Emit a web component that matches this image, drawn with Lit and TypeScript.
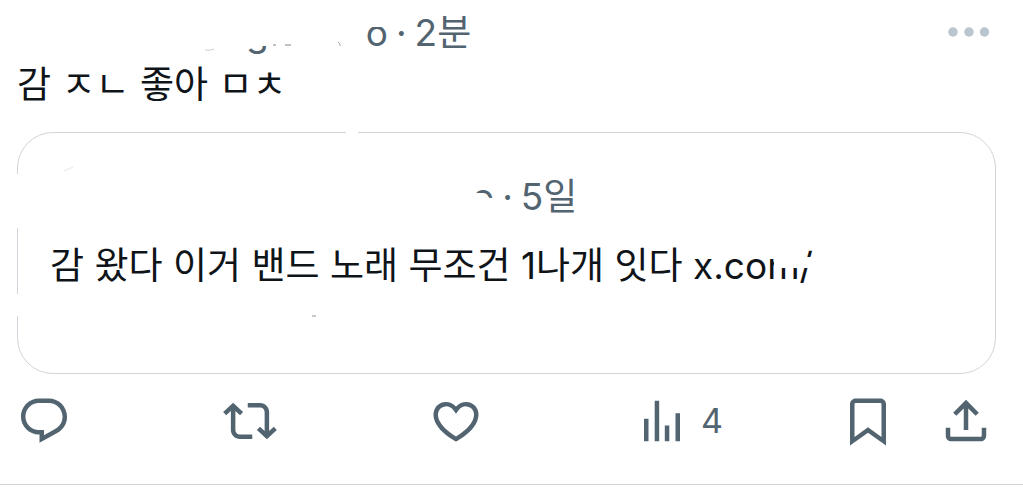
import { LitElement, html, css, svg } from "lit";
import { customElement, property } from "lit/decorators.js";

const ICONS: Record<string, string> = {
  reply:
    "M1.751 10c0-4.42 3.584-8 8.005-8h4.366c4.49 0 8.129 3.64 8.129 8.13 0 2.96-1.607 5.68-4.196 7.11l-8.054 4.46v-3.69h-.067c-4.49.1-8.183-3.51-8.183-8.01zm8.005-6c-3.317 0-6.005 2.69-6.005 6 0 3.37 2.77 6.08 6.138 6.01l.351-.01h1.761v2.3l5.087-2.81c1.951-1.08 3.163-3.13 3.163-5.36 0-3.39-2.744-6.13-6.129-6.13H9.756z",
  repost:
    "M4.5 3.88l4.432 4.14-1.364 1.46L5.5 7.55V16c0 1.1.896 2 2 2H13v2H7.5c-2.209 0-4-1.79-4-4V7.55L1.432 9.48.068 8.02 4.5 3.88zM16.5 6H11V4h5.5c2.209 0 4 1.79 4 4v8.45l2.068-1.93 1.364 1.46-4.432 4.14-4.432-4.14 1.364-1.46 2.068 1.93V8c0-1.1-.896-2-2-2z",
  like:
    "M16.697 5.5c-1.222-.06-2.679.51-3.89 2.16l-.805 1.09-.806-1.09C9.984 6.01 8.526 5.44 7.304 5.5c-1.243.07-2.349.78-2.91 1.91-.552 1.12-.633 2.78.479 4.82 1.074 1.97 3.257 4.27 7.129 6.61 3.87-2.34 6.052-4.64 7.126-6.61 1.111-2.04 1.03-3.7.477-4.82-.561-1.13-1.666-1.84-2.908-1.91zm4.187 7.69c-1.351 2.48-4.001 5.12-8.379 7.67l-.503.3-.504-.3c-4.379-2.55-7.029-5.19-8.382-7.67-1.36-2.5-1.41-4.86-.514-6.67.887-1.79 2.647-2.91 4.601-3.01 1.651-.09 3.368.56 4.798 2.01 1.429-1.45 3.146-2.1 4.796-2.01 1.954.1 3.714 1.22 4.601 3.01.896 1.81.846 4.17-.514 6.67z",
  views:
    "M8.75 21V3h2v18h-2zM18 21V8.5h2V21h-2zM4 21l.004-10h2L6 21H4zm9.248 0v-7h2v7h-2z",
  bookmark:
    "M4 4.5C4 3.12 5.119 2 6.5 2h11C18.881 2 20 3.12 20 4.5v18.44l-8-5.71-8 5.71V4.5zM6.5 4c-.276 0-.5.22-.5.5v14.56l6-4.29 6 4.29V4.5c0-.28-.224-.5-.5-.5h-11z",
  share:
    "M12 2.59l5.7 5.7-1.41 1.42L13 6.41V16h-2V6.41l-3.3 3.3-1.41-1.42L12 2.59zM21 15l-.02 3.51c0 1.38-1.12 2.49-2.5 2.49H5.5C4.11 21 3 19.88 3 18.5V15h2v3.5c0 .28.22.5.5.5h12.98c.28 0 .5-.22.5-.5L19 15h2z",
};

@customElement("post-action")
class PostAction extends LitElement {
  @property() icon = "reply";
  @property() label = "";
  @property() count = "";

  static styles = css`
    :host {
      display: block;
    }
    .action {
      display: flex;
      align-items: center;
      gap: 12px;
      margin: 0;
      padding: 0;
      border: 0;
      background: none;
      color: #536471;
      font: 34px/54px Inter, sans-serif;
      cursor: pointer;
    }
    .icon {
      display: block;
      width: 54px;
      height: 54px;
      fill: currentColor;
    }
  `;

  render() {
    return html`
      <button class="action" type="button" aria-label=${this.label}>
        <svg class="icon" viewBox="0 0 24 24" aria-hidden="true">
          ${svg`<path d=${ICONS[this.icon]}></path>`}
        </svg>
        ${this.count ? html`<span>${this.count}</span>` : null}
      </button>
    `;
  }
}

@customElement("quoted-post")
class QuotedPost extends LitElement {
  static styles = css`
    :host {
      display: block;
    }
    .card {
      position: relative;
      padding: 41px 32px 82px;
      border: 1px solid #cfd5da;
      border-radius: 36px;
    }
    .meta {
      display: flex;
      align-items: center;
      gap: 8px;
      padding-left: 422px;
      color: #536471;
      line-height: 46px;
    }
    .scrap {
      clip-path: polygon(0 0, 100% 0, 100% 24px, 80% 24px, 50% 19px, 0 19px);
    }
    .body {
      position: relative;
      margin: 21px 0 0;
      line-height: 50px;
      color: #0f1419;
    }
    .link {
      position: relative;
      display: inline-block;
      color: inherit;
      text-decoration: none;
    }
    .patch {
      position: absolute;
      background: #fff;
    }
    .patch-top {
      left: 328px;
      top: -2px;
      width: 12px;
      height: 4px;
    }
    .patch-upper {
      left: -2px;
      top: 41px;
      width: 4px;
      height: 54px;
    }
    .patch-lower {
      left: -2px;
      top: 161px;
      width: 4px;
      height: 22px;
    }
    .patch-link {
      left: 0;
      top: 0;
      width: 130px;
      height: 50px;
      background: none;
      fill: #fff;
    }
    .marks {
      position: absolute;
      left: 0;
      top: 0;
      width: 320px;
      height: 200px;
      fill: none;
    }
  `;

  render() {
    return html`
      <article class="card">
        <div class="meta">
          <span class="scrap">o</span>
          <span>·</span>
          <time>5일</time>
        </div>
        <p class="body">
          감 왔다 이거 밴드 노래 무조건 1나개 잇다
          <a class="link" href="#"
            >x.com/<svg class="patch patch-link" viewBox="0 0 130 50" aria-hidden="true">
              <path d="M81 8H106V16H125V27H81Z"></path></svg
          ></a>
        </p>
        <span class="patch patch-top"></span>
        <span class="patch patch-upper"></span>
        <span class="patch patch-lower"></span>
        <svg class="marks" viewBox="0 0 320 200" aria-hidden="true">
          <path d="M46 38l9-4" stroke="#e3e7ea"></path>
          <path d="M294 183h4" stroke="#8d979e"></path>
        </svg>
      </article>
    `;
  }
}

@customElement("app-root")
class AppRoot extends LitElement {
  static styles = css`
    :host {
      display: block;
      background: #fff;
      color: #0f1419;
      font-family: Inter, "Noto Sans CJK KR", sans-serif;
      font-size: 37px;
    }
    .post {
      padding: 7px 27px 36px 17px;
      border-bottom: 1px solid #cfd3d6;
    }
    .header {
      position: relative;
      display: flex;
      align-items: center;
      justify-content: space-between;
      color: #536471;
      line-height: 48px;
    }
    .meta {
      display: flex;
      align-items: center;
      gap: 8px;
      padding: 2px 0 0 229px;
    }
    .tail {
      clip-path: inset(37px 0 0 0);
      margin-right: 89px;
    }
    .open {
      clip-path: inset(18px 0 0 0);
    }
    .marks {
      position: absolute;
      left: 0;
      top: 0;
      width: 360px;
      height: 48px;
      fill: none;
    }
    .more {
      display: block;
      padding: 0;
      border: 0;
      background: none;
      cursor: pointer;
    }
    .more-icon {
      display: block;
      width: 48px;
      height: 48px;
      fill: #b9c6cf;
    }
    .body {
      margin: 2px 0 21px;
      line-height: 52px;
    }
    .actions {
      display: flex;
      align-items: center;
      padding: 20px 3px 0 0;
    }
    .grow {
      flex: 1 1 0;
    }
    .last {
      margin-left: 44px;
    }
  `;

  render() {
    return html`
      <article class="post">
        <header class="header">
          <div class="meta">
            <span class="tail">g</span>
            <span class="open">o</span>
            <span>·</span>
            <time>2분</time>
          </div>
          <svg class="marks" viewBox="0 0 360 48" aria-hidden="true">
            <path d="M188 43q5 1 9-1" stroke="#c9cfd4"></path>
            <path d="M256 38h3M268 38h6" stroke="#7d8a94"></path>
            <path d="M321 35l2 2v2" stroke="#9aa5ad"></path>
          </svg>
          <button class="more" type="button" aria-label="더 보기">
            <svg class="more-icon" viewBox="0 0 48 48" aria-hidden="true">
              <circle cx="5" cy="24" r="4.7"></circle>
              <circle cx="21" cy="24" r="4.7"></circle>
              <circle cx="36.5" cy="24" r="4.7"></circle>
            </svg>
          </button>
        </header>
        <p class="body">감 ㅈㄴ 좋아 ㅁㅊ</p>
        <quoted-post></quoted-post>
        <div class="actions">
          <post-action class="grow" icon="reply" label="답글"></post-action>
          <post-action class="grow" icon="repost" label="재게시"></post-action>
          <post-action class="grow" icon="like" label="마음에 들어요"></post-action>
          <post-action class="grow" icon="views" label="조회수 4" count="4"></post-action>
          <post-action icon="bookmark" label="북마크"></post-action>
          <post-action class="last" icon="share" label="공유"></post-action>
        </div>
      </article>
    `;
  }
}
